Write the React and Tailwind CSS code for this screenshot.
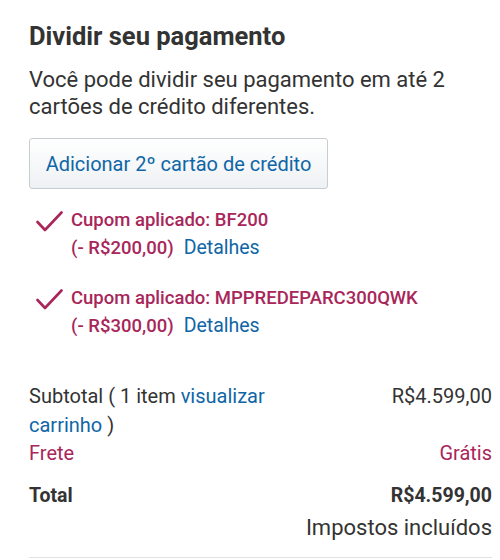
export default function App() {
    const cupons = [
        { codigo: "BF200", valor: "(- R$200,00)" },
        { codigo: "MPPREDEPARC300QWK", valor: "(- R$300,00)" },
    ]

    return (
        <div className="w-[500px] h-[560px] overflow-hidden bg-white font-['Roboto',sans-serif] pl-[29px] pr-[8px] pt-[20px]">
            <h2 className="text-[25.5px] leading-[32px] font-bold text-[#333]">Dividir seu pagamento</h2>

            <p className="mt-[14px] w-[450px] text-[22px] leading-[27px] text-[#333]">
                Você pode dividir seu pagamento em até 2 cartões de crédito diferentes.
            </p>

            <button className="mt-[18px] h-[51px] w-[299px] rounded-[3px] border border-[#c8cdd1] bg-gradient-to-b from-white to-[#eef1f3] text-[20px] text-[#0f66a6] text-center">
                Adicionar 2º cartão de crédito
            </button>

            <div className="mt-[17px] flex flex-col gap-[22px] pl-[7px]">
                {cupons.map((c) => (
                    <div key={c.codigo} className="flex gap-[8px]">
                        <svg width="27" height="21" viewBox="0 0 27 21" className="mt-[5px] shrink-0">
                            <path d="M1.5 11 L9 19 L25.5 1.5" fill="none" stroke="#a8265a" strokeWidth="2.6" strokeLinecap="round" strokeLinejoin="round" />
                        </svg>
                        <div className="text-[18.5px] leading-[28px] font-medium text-[#a8265a]">
                            <p>Cupom aplicado: {c.codigo}</p>
                            <p>
                                {c.valor}
                                <span className="ml-[10px] text-[19.5px] font-normal text-[#0f66a6]">Detalhes</span>
                            </p>
                        </div>
                    </div>
                ))}
            </div>

            <div className="mt-[42px] text-[20px] leading-[28.5px] text-[#333]">
                <div className="flex justify-between">
                    <p className="w-[260px]">
                        Subtotal ( 1 item <span className="text-[#0f66a6]">visualizar carrinho</span> )
                    </p>
                    <p>R$4.599,00</p>
                </div>
                <div className="flex justify-between text-[#a8265a]">
                    <p>Frete</p>
                    <p>Grátis</p>
                </div>
                <div className="mt-[14px] flex justify-between font-bold text-[19.5px]">
                    <p>Total</p>
                    <p>R$4.599,00</p>
                </div>
                <p className="mt-[2px] text-right text-[22px] leading-[32px]">Impostos incluídos</p>
                <div className="mt-[13px] border-t border-[#e2e2e2]" />
            </div>
        </div>
    )
}
